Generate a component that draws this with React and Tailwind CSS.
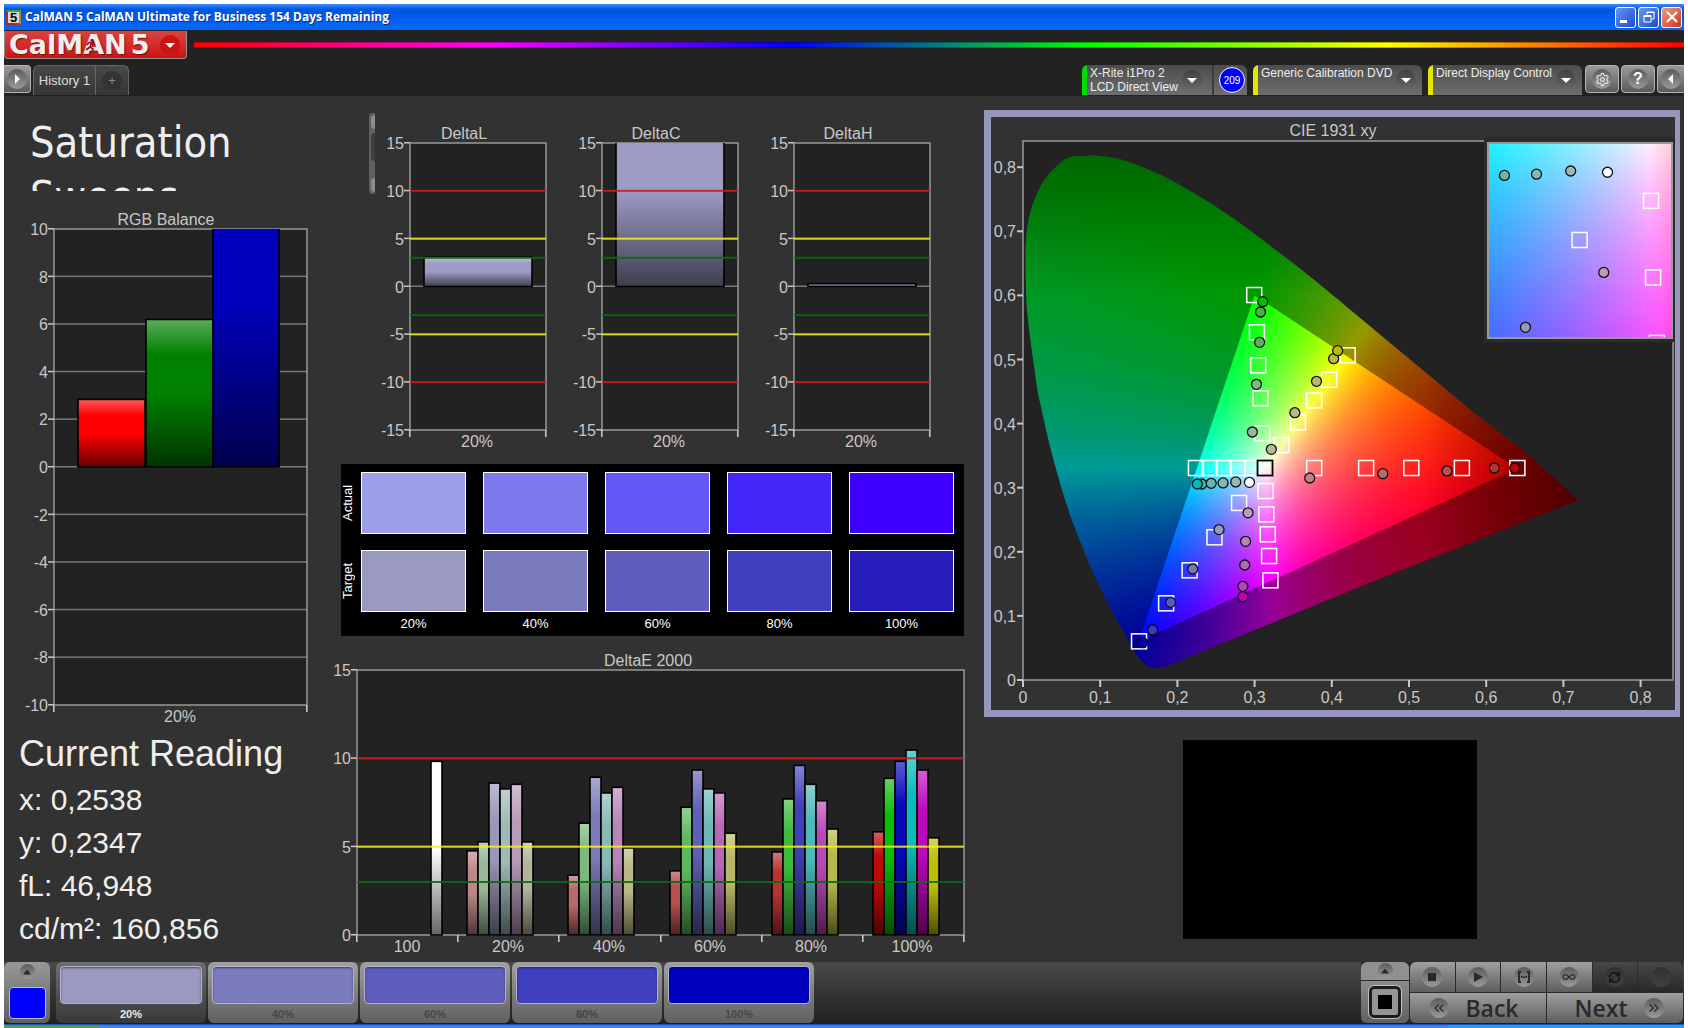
import { ChevronsLeft, ChevronsRight, RefreshCw, Settings, Infinity as InfinityIcon } from 'lucide-react';

const LIMITS = [
  { value: 10, color: '#cc1e1e' },
  { value: 5, color: '#f0ee20' },
  { value: 3, color: '#0c6a12' },
];

const BOTH_LIMITS = [...LIMITS, ...LIMITS.map((l) => ({ ...l, value: -l.value }))];

const SATURATIONS = [
  { label: '20%', actual: '#9c9fe9', target: '#9a99bf' },
  { label: '40%', actual: '#7e7aee', target: '#7c7bbd' },
  { label: '60%', actual: '#6258f6', target: '#5f5ebc' },
  { label: '80%', actual: '#4427fb', target: '#413fbd' },
  { label: '100%', actual: '#3d00ff', target: '#261cb9' },
];

const STEPS = [
  { label: '20%', color: '#9a99bf' },
  { label: '40%', color: '#7b7bbd' },
  { label: '60%', color: '#5e5ebd' },
  { label: '80%', color: '#403fbd' },
  { label: '100%', color: '#0000be' },
];

const DELTA_E = [
  { start: 110, values: [4.76, 5.27, 8.6, 8.27, 8.53, 5.27], colors: ['#bb8888', '#98b898', '#9898b9', '#a0b9b9', '#b99cb9', '#b4b49c'] },
  { start: 211, values: [3.39, 6.33, 8.93, 8.04, 8.36, 4.93], colors: ['#b86868', '#7db87d', '#7c7cba', '#88b8b8', '#b985b9', '#b8b885'] },
  { start: 313, values: [3.63, 7.23, 9.34, 8.27, 8.04, 5.76], colors: ['#b85050', '#5eb85e', '#6060b9', '#70b8b8', '#b968b9', '#b8b868'] },
  { start: 415, values: [4.7, 7.7, 9.6, 8.53, 7.6, 6.0], colors: ['#b83232', '#40b840', '#4040b9', '#50b8b8', '#b848b8', '#b8b84a'] },
  { start: 516, values: [5.84, 8.87, 9.83, 10.47, 9.34, 5.5], colors: ['#bd0808', '#08bd08', '#0808bd', '#08bdbd', '#bd08bd', '#bdbd08'] },
];

const DELTA_E_BARS = [
  { x: 74, width: 11, value: 9.83, color: '#ffffff' },
  ...DELTA_E.flatMap((g) =>
    g.values.map((value, i) => ({ x: g.start + i * 11, width: 11, value, color: g.colors[i] })),
  ),
];

// Spectral locus, as CIE 1931 x,y pairs
const LOCUS = [
  [0.076, 0.8175], [0.0994, 0.8175], [0.1316, 0.8102], [0.1784, 0.7878], [0.2252, 0.7566], [0.272, 0.7202],
  [0.3187, 0.6786], [0.3772, 0.624], [0.4474, 0.5538], [0.5176, 0.4836], [0.5948, 0.4066], [0.655, 0.351],
  [0.7194, 0.2808], [0.4416, 0.1482], [0.1842, 0.0205], [0.1738, 0.019], [0.1638, 0.0205], [0.1491, 0.0364],
  [0.1316, 0.0728], [0.0994, 0.1456], [0.0643, 0.247], [0.0409, 0.338], [0.0215, 0.4368], [0.0146, 0.4888],
  [0.0058, 0.572], [0.0035, 0.6448], [0.0047, 0.6968], [0.0117, 0.7384], [0.0263, 0.7774], [0.0468, 0.805],
  [0.0614, 0.8154],
];

const TARGETS = [
  [0.2995, 0.6006], [0.303, 0.5424], [0.3047, 0.4909], [0.3076, 0.4394], [0.31, 0.3848],
  [0.4205, 0.5065], [0.3965, 0.4685], [0.3772, 0.4363], [0.3562, 0.402], [0.3345, 0.3666],
  [0.6404, 0.3307], [0.5685, 0.3307], [0.503, 0.3307], [0.4445, 0.3307], [0.3772, 0.3307],
  [0.224, 0.3307], [0.2416, 0.3307], [0.2603, 0.3307], [0.2784, 0.3307], [0.297, 0.3307],
  [0.3142, 0.2948], [0.3152, 0.2584], [0.317, 0.2273], [0.3188, 0.1934], [0.3205, 0.1555],
  [0.2799, 0.2762], [0.248, 0.2226], [0.2158, 0.1711], [0.1854, 0.1196], [0.1503, 0.0603],
];

const READINGS = [
  [0.3076, 0.5741, '#3fb83f'], [0.3106, 0.5902, '#00bd00'], [0.3065, 0.5268, '#5eb05e'],
  [0.3024, 0.4613, '#7db87d'], [0.2971, 0.3869, '#98b898'],
  [0.4024, 0.5013, '#b9b94a'], [0.4076, 0.5138, '#bdbd00'], [0.3802, 0.4659, '#b9b96a'],
  [0.3521, 0.417, '#b9b985'], [0.3217, 0.3599, '#b9b99c'],
  [0.6369, 0.3307, '#bd0000'], [0.6106, 0.3307, '#b83232'], [0.5492, 0.3261, '#b45050'],
  [0.4661, 0.3219, '#b86a6a'], [0.3714, 0.3151, '#b98585'],
  [0.2316, 0.3058, '#45b5b0'], [0.2258, 0.3058, '#00bdbd'], [0.2438, 0.3069, '#68b8b0'],
  [0.2592, 0.3075, '#85b8b5'], [0.2756, 0.309, '#9ab8b8'], [0.2933, 0.3084, '#ffffff'],
  [0.2915, 0.2608, '#b99cb9'], [0.2883, 0.2163, '#b985b9'], [0.2872, 0.1794, '#b968b9'],
  [0.2848, 0.1461, '#b845b8'], [0.2848, 0.13, '#bd00bd'],
  [0.2539, 0.2347, '#9898b9'], [0.2199, 0.1732, '#7878b9'], [0.1913, 0.1212, '#5a5ab9'],
  [0.1679, 0.078, '#3c3cb9'], [0.155, 0.0582, '#0000bd'],
];

function colorAt(x, y) {
  const yy = Math.max(y, 0.001);
  const X = x / yy;
  const Z = (1 - x - y) / yy;
  const lin = [
    3.2406 * X - 1.5372 - 0.4986 * Z,
    -0.9689 * X + 1.8758 + 0.0415 * Z,
    0.0557 * X - 0.204 + 1.057 * Z,
  ].map((v) => Math.max(v, 0));
  const max = Math.max(...lin);
  let fade = 1 - Math.min(Math.max((x - 0.52) / 0.2, 0), 1) * 0.5;
  if (y > 0.6) fade *= 1 - (y - 0.6) * 1.5;
  const [r, g, b] = lin.map((v) => Math.round((255 * fade * v) / max));
  return `rgb(${r},${g},${b})`;
}

// Closed Catmull-Rom curve through the points, straight around the red corner
function smoothPath(points) {
  const n = points.length;
  let d = `M${points[0].join(' ')}`;
  for (let i = 0; i < n; i++) {
    const [p0, p1, p2, p3] = [-1, 0, 1, 2].map((o) => points[(i + o + n) % n]);
    if (i >= 11 && i <= 14) {
      d += `L${p2.join(' ')}`;
    } else {
      const c1 = [p1[0] + (p2[0] - p0[0]) / 6, p1[1] + (p2[1] - p0[1]) / 6];
      const c2 = [p2[0] - (p3[0] - p1[0]) / 6, p2[1] - (p3[1] - p1[1]) / 6];
      d += `C${c1.join(' ')} ${c2.join(' ')} ${p2.join(' ')}`;
    }
  }
  return `${d}Z`;
}

function ColorField({ id, left, top, width, height, toX, toY, stops }) {
  const rows = [];
  for (let y = 0; y < height; y += 2) rows.push(top + y);
  return (
    <g shapeRendering="crispEdges">
      {rows.map((y, i) => (
        <g key={y}>
          <linearGradient id={`${id}-${i}`} gradientUnits="userSpaceOnUse" x1={left} x2={left + width} y1="0" y2="0">
            {Array.from({ length: stops + 1 }, (_, s) => (
              <stop key={s} offset={s / stops} stopColor={colorAt(toX(left + (width * s) / stops), toY(y + 1))} />
            ))}
          </linearGradient>
          <rect x={left} y={y} width={width} height={Math.min(2, top + height - y)} fill={`url(#${id}-${i})`} />
        </g>
      ))}
    </g>
  );
}

function Markers({ px, py }) {
  return (
    <>
      {TARGETS.map(([x, y], i) => (
        <rect key={i} x={px(x) - 7.5} y={py(y) - 7.5} width="15" height="15" fill="none" stroke="#fff" strokeWidth="1.5" />
      ))}
      <rect x={px(0.3135) - 7.5} y={py(0.3307) - 7.5} width="15" height="15" fill="none" stroke="#000" strokeWidth="1.8" />
      {READINGS.map(([x, y, fill], i) => (
        <circle key={i} cx={px(x)} cy={py(y)} r="5" fill={fill} stroke="#111" strokeWidth="1.3" />
      ))}
    </>
  );
}

function CieChart() {
  const px = (x) => 32 + x * 772;
  const py = (y) => 563 - y * 641;
  const zx = (x) => 497 + (x - 0.2359) * 2082;
  const zy = (y) => 26 + (0.3223 - y) * 2104;
  const locus = smoothPath(LOCUS.map(([x, y]) => [px(x), py(y)]));
  const triangle = `M${px(0.64)} ${py(0.33)}L${px(0.3)} ${py(0.6)}L${px(0.15)} ${py(0.06)}Z`;
  const ticks = [0, 1, 2, 3, 4, 5, 6, 7, 8];

  return (
    <svg viewBox="0 0 684 593" className="block w-full text-[16px]" role="img" aria-label="CIE 1931 xy">
      <clipPath id="locus"><path d={locus} /></clipPath>
      <clipPath id="inset"><rect x="497" y="26" width="184" height="195" /></clipPath>
      <text x="342" y="19" textAnchor="middle" fill="#c8c8c8">CIE 1931 xy</text>
      <rect x="32" y="24" width="650" height="539" fill="#222" stroke="#9a9a9a" strokeWidth="1.5" />
      {ticks.map((t) => (
        <g key={t} fill="#c8c8c8" stroke="none">
          <rect x="26" y={py(t / 10) - 1} width="6" height="2" />
          <text x="25" y={py(t / 10) + 6} textAnchor="end">{t ? `0,${t}` : '0'}</text>
          <rect x={px(t / 10) - 1} y="563" width="2" height="7" />
          <text x={px(t / 10)} y="586" textAnchor="middle">{t ? `0,${t}` : '0'}</text>
        </g>
      ))}
      <g clipPath="url(#locus)">
        <ColorField id="cie" left={32} top={36} width={558} height={520} toX={(p) => (p - 32) / 772} toY={(p) => (563 - p) / 641} stops={64} />
        <path d={`M0 0H684V593H0Z${triangle}`} fillRule="evenodd" fill="#000" fillOpacity="0.4" />
      </g>
      <Markers px={px} py={py} />
      <rect x="493" y="20" width="191" height="205" fill="#2c2c2c" />
      <g clipPath="url(#inset)">
        <ColorField
          id="zoom" left={497} top={26} width={184} height={195} stops={16}
          toX={(p) => 0.2359 + (p - 497) / 2082} toY={(p) => 0.3223 - (p - 26) / 2104}
        />
        <Markers px={zx} py={zy} />
      </g>
      <rect x="497" y="26" width="184" height="195" fill="none" stroke="#9a9a9a" strokeWidth="2" />
    </svg>
  );
}

function BarChart({ id, title, titleX, width, height, plot, min, max, ticks, grid = [], limits = [], bars, labels, marks }) {
  const { x, y, w, h } = plot;
  const toY = (v) => y + ((max - v) * h) / (max - min);

  return (
    <svg viewBox={`0 0 ${width} ${height}`} className="block w-full text-[16px]" role="img" aria-label={title}>
      <linearGradient id={`${id}-shade`} x1="0" x2="0" y1="0" y2="1">
        <stop offset="0" stopColor="#fff" stopOpacity="0.35" />
        <stop offset="0.24" stopColor="#fff" stopOpacity="0" />
        <stop offset="0.5" stopColor="#000" stopOpacity="0" />
        <stop offset="1" stopColor="#000" stopOpacity="0.6" />
      </linearGradient>
      <clipPath id={`${id}-plot`}><rect x={x} y={y} width={w} height={h + 2} /></clipPath>
      <text x={titleX} y={y - 4} textAnchor="middle" fill="#c8c8c8">{title}</text>
      <rect x={x} y={y} width={w} height={h} fill="#222" />
      {grid.map((v) => (
        <rect key={v} x={x} y={toY(v) - 1} width={w} height="1.5" fill="#787878" />
      ))}
      <rect x={x} y={y} width={w} height={h} fill="none" stroke="#929292" strokeWidth="1.6" />
      <g clipPath={`url(#${id}-plot)`}>
        {bars.map((b) => {
          const box = { x: x + b.x, y: toY(b.value), width: b.width, height: toY(0) - toY(b.value) };
          return (
            <g key={b.x}>
              <rect {...box} fill={b.color} />
              <rect {...box} fill={`url(#${id}-shade)`} stroke="#000" strokeWidth="1.6" />
            </g>
          );
        })}
      </g>
      {limits.map((l) => (
        <rect key={l.value} x={x} y={toY(l.value) - 1} width={w} height="2" fill={l.color} fillOpacity="0.9" />
      ))}
      {ticks.map((t) => (
        <g key={t} fill="#c8c8c8">
          <rect x={x - 6} y={toY(t) - 1} width="6" height="1.5" />
          <text x={x - 6} y={toY(t) + 6} textAnchor="end">{t}</text>
        </g>
      ))}
      {marks.map((m) => (
        <rect key={m} x={x + m - 1} y={y + h} width="1.6" height="7" fill="#c8c8c8" />
      ))}
      {labels.map((l) => (
        <text key={l.text} x={x + l.x} y={y + h + 17} textAnchor="middle" fill="#c8c8c8">{l.text}</text>
      ))}
    </svg>
  );
}

function DeltaChart({ title, value }) {
  return (
    <div className="min-w-0 flex-1">
      <BarChart
        id={title} title={title} titleX={86} width={192} height={346}
        plot={{ x: 32, y: 30, w: 136, h: 287 }} min={-15} max={15}
        ticks={[15, 10, 5, 0, -5, -10, -15]} grid={[0]} limits={BOTH_LIMITS}
        bars={[{ x: 14, width: 108, value, color: '#9c9bc4' }]}
        labels={[{ x: 67, text: '20%' }]} marks={[0, 136]}
      />
    </div>
  );
}

function Dot({ children, size = 'size-5', tone = 'from-[#5c5c5c] to-[#9a9a9a]' }) {
  return (
    <span className={`flex items-center justify-center rounded-full bg-gradient-to-b ${size} ${tone}`}>
      {children}
    </span>
  );
}

function Triangle({ d, className = 'size-[10px] fill-white' }) {
  return <svg viewBox="0 0 10 10" className={className}><path d={d} /></svg>;
}

const DOWN = 'M0 3h10l-5 5z';
const UP = 'M0 8h10l-5-6z';

function TitleBar() {
  return (
    <div className="flex h-[26px] items-center bg-gradient-to-b from-[#3c8cf8] via-[#0054e3] via-20% to-[#0468fb] pr-[2px] pl-[2px]">
      <span className="mr-1 flex size-[15px] items-center justify-center border-2 border-[#a03030] border-t-[#40a040] border-r-[#c08040] bg-[#d8d8d0] text-[13px] leading-none font-bold text-black">5</span>
      <h1 className="flex-1 font-['Open_Sans',sans-serif] text-[12px] font-bold text-white [text-shadow:1px_1px_0_#0a2c80]">
        CalMAN 5 CalMAN Ultimate for Business 154 Days Remaining
      </h1>
      <div className="flex gap-[2px]">
        <button aria-label="Minimize" className="flex size-[21px] items-end rounded-[3px] border border-white bg-gradient-to-br from-[#6b94f0] to-[#1c48cc] p-1">
          <span className="h-[3px] w-[7px] bg-white" />
        </button>
        <button aria-label="Restore" className="flex size-[21px] items-center justify-center rounded-[3px] border border-white bg-gradient-to-br from-[#6b94f0] to-[#1c48cc]">
          <svg viewBox="0 0 12 12" className="size-3 fill-none stroke-white"><path d="M4 3.500V1h7v7H8.500M4 1.500h7M1 4.500h7v6.500H1zM1 5.500h7" /></svg>
        </button>
        <button aria-label="Close" className="flex size-[21px] items-center justify-center rounded-[3px] border border-white bg-gradient-to-br from-[#ee9a80] to-[#c8320c]">
          <svg viewBox="0 0 12 12" className="size-3 stroke-white stroke-2"><path d="M1 1l10 10M11 1L1 11" /></svg>
        </button>
      </div>
    </div>
  );
}

function Device({ color, lines, badge, className }) {
  return (
    <div className={`flex h-[30px] overflow-hidden rounded-t-md bg-gradient-to-b from-[#4c4c4c] to-[#6e6e6e] ${className}`}>
      <button className="flex min-w-0 flex-1 items-start text-left text-[12px] leading-[14px] text-[#eee]">
        <span className={`mr-[3px] h-[30px] w-[5px] shrink-0 ${color}`} />
        <span className="flex-1 pt-[1px] whitespace-nowrap">
          {lines.map((l) => <span key={l} className="block">{l}</span>)}
        </span>
        <span className={`mt-[5px] flex size-5 shrink-0 items-center justify-center rounded-full bg-gradient-to-b from-[#404040] to-[#686868] ${badge ? 'mr-[10px]' : 'mr-[6px]'}`}>
          <Triangle d={DOWN} />
        </span>
      </button>
      {badge && (
        <span className="flex w-[35px] items-center justify-center border-l-2 border-[#3c3c3c] pl-[3px]">
          <span className="flex size-[26px] items-center justify-center rounded-full border border-white bg-[#0000fa] text-[10px] text-white">{badge}</span>
        </span>
      )}
    </div>
  );
}

function Header() {
  const toolButton = 'flex h-[28px] items-center justify-center rounded-[4px] border border-[#b4b4b4] bg-gradient-to-b from-[#9a9a9a] to-[#5c5c5c]';
  const logoText = "font-['DejaVu_Sans',sans-serif] leading-[24px] font-bold text-[#eee] [text-shadow:1px_1px_1px_#7a1010]";
  return (
    <header className="bg-[#222]">
      <div className="flex h-[35px] pt-[1px]">
        <button aria-label="CalMAN 5 menu" className="flex h-[28px] w-[183px] items-center rounded-b-[4px] border border-t-0 border-[#909090] bg-gradient-to-b from-[#dc4040] to-[#cc1010] pl-[4px]">
          <span className={`relative text-[27px] ${logoText}`}>
            CalMAN
            <svg viewBox="0 0 12 14" className="absolute top-[6px] left-[76px] h-[14px] w-3 fill-none stroke-[#8c1414] stroke-[1.6]">
              <circle cx="7" cy="1.500" r="0.800" />
              <path d="M6.500 3.500L5 8l3 2-1 4M5 8l-4 3M2 6l2-2.500h3l3 2.500" />
            </svg>
          </span>
          <span className={`ml-[4px] text-[27px] ${logoText}`}>5</span>
          <span className="mr-[6px] ml-auto flex size-5 items-center justify-center rounded-full bg-[#c81414]">
            <Triangle d={DOWN} />
          </span>
        </button>
        <div className="mt-[11px] ml-[7px] h-[6px] flex-1 border-y border-black/30 bg-[linear-gradient(to_right,#f00,#f0f_20%,#00f_40%,#0f0_60%,#ff0_80%,#f00)]" />
      </div>
      <div className="flex h-[31px] items-start">
        <button aria-label="Show workflow" className={`${toolButton} w-[27px] rounded-l-none border-l-0`}>
          <Dot><Triangle d="M3 0v10l5-5z" /></Dot>
        </button>
        <nav className="ml-[2px] flex h-[30px] rounded-t-md border border-b-0 border-[#666] bg-gradient-to-b from-[#484848] to-[#363636]">
          <button className="w-[62px] border-r border-[#666] text-[13px] text-[#ddd]">History 1</button>
          <button aria-label="Add tab" className="flex w-[32px] items-center justify-center">
            <span className="flex size-5 items-center justify-center rounded-full bg-[#333] text-[13px] text-[#8a8a8a]">+</span>
          </button>
        </nav>
        <div className="ml-auto flex">
          <Device color="bg-[#00dc00]" lines={['X-Rite i1Pro 2', 'LCD Direct View']} badge="209" className="mr-[6px] w-[165px]" />
          <Device color="bg-[#e6e600]" lines={['Generic Calibration DVD']} className="mr-[6px] w-[169px]" />
          <Device color="bg-[#e6e600]" lines={['Direct Display Control']} className="mr-[3px] w-[154px]" />
          <button aria-label="Settings" className={`${toolButton} mr-[2px] w-[34px]`}>
            <Dot><Settings size={15} className="text-[#e0e0e0]" /></Dot>
          </button>
          <button aria-label="Help" className={`${toolButton} mr-[2px] w-[34px] text-[16px] font-bold text-white`}>
            <Dot>?</Dot>
          </button>
          <button aria-label="Collapse" className={`${toolButton} w-[27px] rounded-r-none border-r-0`}>
            <Dot><Triangle d="M7 0v10l-5-5z" /></Dot>
          </button>
        </div>
      </div>
    </header>
  );
}

function SwatchPanel() {
  const cells = 'grid flex-1 grid-cols-5 gap-x-[17px]';
  return (
    <div className="mr-5 ml-[9px] bg-black pt-2 pr-[10px] text-[13px] text-white">
      {['Actual', 'Target'].map((row) => (
        <div key={row} className="mb-4 flex h-[62px] last-of-type:mb-0">
          <span className="mr-[6px] flex w-[14px] rotate-180 items-center justify-center leading-[14px] [writing-mode:vertical-rl]">{row}</span>
          <div className={cells}>
            {SATURATIONS.map((s) => (
              <div key={s.label} className="border border-white" style={{ backgroundColor: row === 'Actual' ? s.actual : s.target }} />
            ))}
          </div>
        </div>
      ))}
      <p className="flex pl-5">
        <span className={cells}>
          {SATURATIONS.map((s) => (
            <span key={s.label} className="text-center leading-[24px]">{s.label}</span>
          ))}
        </span>
      </p>
    </div>
  );
}

function Reading() {
  return (
    <section className="pl-[15px] text-[30px] leading-[43px] text-[#eee]">
      <h2 className="text-[36px] leading-[48px]">Current Reading</h2>
      <p>x: 0,2538</p>
      <p>y: 0,2347</p>
      <p>fL: 46,948</p>
      <p>cd/m²: 160,856</p>
    </section>
  );
}

function Transport() {
  const cell = 'flex items-center justify-center bg-gradient-to-b from-[#a0a0a0] to-[#5e5e5e]';
  const off = 'flex items-center justify-center bg-gradient-to-b from-[#484848] to-[#282828]';
  const offTone = 'from-[#303030] to-[#424242]';
  return (
    <div className="ml-auto flex gap-[1px] bg-[#2a2a2a] text-[#2a2a2a]">
      <div className="flex w-[48px] flex-col gap-[1px]">
        <button aria-label="More" className="flex h-[18px] items-center justify-center rounded-t-md bg-[#909090]">
          <Dot size="size-[15px]"><Triangle d={UP} className="size-2 fill-[#2a2a2a]" /></Dot>
        </button>
        <button aria-label="Read" className="flex h-[43px] items-center justify-center rounded-b-md bg-gradient-to-b from-[#8c8c8c] to-[#606060]">
          <span className="flex size-8 items-center justify-center rounded-[5px] border-3 border-[#1c1c1c] bg-[#949494] outline outline-[#c0c0c0]">
            <span className="size-[14px] bg-black" />
          </span>
        </button>
      </div>
      <div className="grid w-[273px] grid-cols-6 grid-rows-[30px_30px] gap-[1px]">
        <button aria-label="Stop" className={`${cell} rounded-tl-md`}><Dot><span className="size-2 bg-[#2a2a2a]" /></Dot></button>
        <button aria-label="Play" className={cell}><Dot><Triangle d="M1 0v10l9-5z" className="size-[10px] fill-[#2a2a2a]" /></Dot></button>
        <button aria-label="Read series" className={cell}>
          <Dot>
            <svg viewBox="0 0 14 12" className="h-3 w-[14px] fill-none stroke-[#2a2a2a] stroke-2">
              <path d="M4 1H2v10h2M10 1h2v10h-2" /><path d="M4 6h6" strokeDasharray="1.500 0.800" />
            </svg>
          </Dot>
        </button>
        <button aria-label="Read continuously" className={cell}><Dot><InfinityIcon size={14} /></Dot></button>
        <button aria-label="Refresh" className={off}><Dot tone={offTone}><RefreshCw size={13} strokeWidth={3} className="text-[#161616]" /></Dot></button>
        <button aria-label="Record" className={`${off} rounded-tr-md`}><Dot tone={offTone} /></button>
        <button className={`${cell} col-span-3 gap-4 rounded-bl-md pr-2 font-['Open_Sans',sans-serif] text-[23px] font-semibold`}>
          <Dot><ChevronsLeft size={16} /></Dot>Back
        </button>
        <button className={`${cell} col-span-3 gap-4 rounded-br-md pl-2 font-['Open_Sans',sans-serif] text-[23px] font-semibold`}>
          Next<Dot><ChevronsRight size={16} /></Dot>
        </button>
      </div>
    </div>
  );
}

function Footer() {
  return (
    <footer>
      <div className="flex h-[62px] bg-gradient-to-b from-[#4a4a4a] to-[#202020] pr-[1px] pb-[1px]">
        <button aria-label="Pattern colour" className="mr-[6px] flex w-[46px] flex-col items-center gap-[8px] rounded-md bg-gradient-to-b from-[#989898] to-[#606060] pt-[2px]">
          <Dot size="size-[15px]"><Triangle d={UP} className="size-2 fill-[#2a2a2a]" /></Dot>
          <span className="h-[32px] w-[37px] rounded-[4px] border border-[#c0c0c0] bg-[#0000ff]" />
        </button>
        <div className="flex gap-[2px]">
          {STEPS.map((s, i) => (
            <button
              key={s.label}
              className={`w-[150px] rounded-md bg-gradient-to-b px-1 pt-[4px] text-[11px] leading-[20px] font-bold ${
                i === 0 ? 'from-[#707070] to-[#383838] text-[#e8e8e8]' : 'from-[#a0a0a0] to-[#606060] text-[#464646]'
              }`}
            >
              <span className="block h-[38px] rounded-[4px] border border-[#b4b4cc] shadow-[inset_0_1px_2px_rgba(0,0,0,0.5)]" style={{ backgroundColor: s.color }} />
              {s.label}
            </button>
          ))}
        </div>
        <Transport />
      </div>
      <div className="flex h-1 border-t border-[#1c50b8] bg-[#3c84f0]">
        <div className="w-[96px] bg-[#4ca04c]" />
        <div className="ml-auto w-[236px] bg-[#18a4f4]" />
      </div>
    </footer>
  );
}

export default function App() {
  return (
    <div className="min-h-screen bg-white px-1 pt-1 font-['Liberation_Sans',Arial,sans-serif]">
      <div className="flex min-h-[calc(100vh-4px)] flex-col bg-[#323232]">
        <TitleBar />
        <Header />
        <main className="grid flex-1 grid-cols-[328fr_652fr_700fr] items-start">
          <div className="pt-[17px]">
            <h2 className="h-[78px] overflow-hidden pt-[2px] pl-[26px] font-['DejaVu_Sans_Condensed','Noto_Sans',sans-serif] text-[43px] leading-[54px] text-[#eee]">
              Saturation<br />Sweeps
            </h2>
            <div className="mt-[13px] pr-[12px] pl-4">
              <BarChart
                id="rgb" title="RGB Balance" titleX={146} width={300} height={520}
                plot={{ x: 34, y: 25, w: 253, h: 476 }} min={-10} max={10}
                ticks={[10, 8, 6, 4, 2, 0, -2, -4, -6, -8, -10]}
                grid={[8, 6, 4, 2, 0, -2, -4, -6, -8]}
                bars={[
                  { x: 24, width: 67, value: 2.84, color: '#ff0000' },
                  { x: 92, width: 67, value: 6.2, color: '#008000' },
                  { x: 159, width: 66, value: 14, color: '#0000be' },
                ]}
                labels={[{ x: 126, text: '20%' }]} marks={[0, 253]}
              />
            </div>
            <div className="mt-[6px]"><Reading /></div>
          </div>

          <div className="pt-[17px]">
            <div className="flex pr-[30px] pl-[37px]">
              <div className="mr-[3px] flex h-[81px] w-[6px] flex-col justify-between rounded-l-[4px] bg-[#606060] py-[2px] pl-[2px]">
                <span className="h-[14px] rounded-l bg-[#8c8c8c]" />
                <span className="mt-1 mb-auto h-[28px] rounded-l-full bg-[#3e3e3e]" />
                <span className="h-[14px] rounded-l bg-[#8c8c8c]" />
              </div>
              <DeltaChart title="DeltaL" value={3.1} />
              <DeltaChart title="DeltaC" value={20} />
              <DeltaChart title="DeltaH" value={0.3} />
            </div>
            <div className="mt-[5px]"><SwatchPanel /></div>
            <div className="mt-[10px] pr-4">
              <BarChart
                id="de" title="DeltaE 2000" titleX={316} width={636} height={312}
                plot={{ x: 25, y: 24, w: 607, h: 265 }} min={0} max={15}
                ticks={[15, 10, 5, 0]} limits={LIMITS} bars={DELTA_E_BARS}
                labels={['100', '20%', '40%', '60%', '80%', '100%'].map((text, i) => ({ text, x: 50 + i * 101 }))}
                marks={[0, 101, 202, 304, 405, 506, 607]}
              />
            </div>
          </div>

          <div className="pt-[14px] pr-1">
            <div className="border-[7px] border-r-[5px] border-[#9796bd]">
              <CieChart />
            </div>
            <div className="pr-1">
              <div className="mx-auto mt-[23px] h-[199px] w-[294px] bg-black" />
            </div>
          </div>
        </main>
        <Footer />
      </div>
    </div>
  );
}
